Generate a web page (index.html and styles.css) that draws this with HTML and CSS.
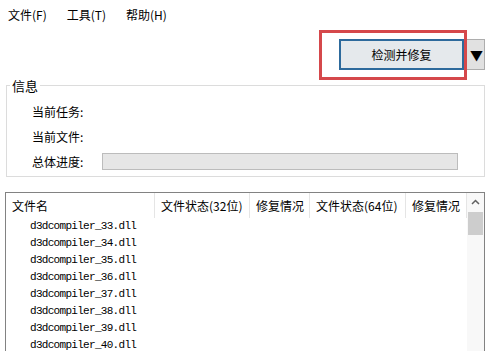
FILE: index.html
```html
<!DOCTYPE html>
<html lang="zh-CN">
	<head>
		<title>DLL修复</title>
		<meta charset="utf-8">
		<link rel="stylesheet" href="styles.css">
	</head>
	<body>
		<div id="window">
			<div class="menubar">
				<span class="menu">文件(F)</span>
				<span class="menu">工具(T)</span>
				<span class="menu">帮助(H)</span>
			</div>
			<div class="toolbar">
				<button type="button" class="btn primary">检测并修复</button>
				<button type="button" class="btn drop">▼</button>
				<div class="highlight"></div>
			</div>
			<fieldset class="group">
				<legend>信息</legend>
				<div class="field"><label>当前任务:</label></div>
				<div class="field"><label>当前文件:</label></div>
				<div class="field"><label>总体进度:</label><div class="progress"></div></div>
			</fieldset>
			<div class="listview">
				<div class="list-main">
					<div class="list-head">
						<div class="col c1">文件名</div>
						<div class="col c2">文件状态(32位)</div>
						<div class="col c3">修复情况</div>
						<div class="col c4">文件状态(64位)</div>
						<div class="col c5">修复情况</div>
					</div>
					<div class="list-body">
						<div class="row">d3dcompiler_33.dll</div>
						<div class="row">d3dcompiler_34.dll</div>
						<div class="row">d3dcompiler_35.dll</div>
						<div class="row">d3dcompiler_36.dll</div>
						<div class="row">d3dcompiler_37.dll</div>
						<div class="row">d3dcompiler_38.dll</div>
						<div class="row">d3dcompiler_39.dll</div>
						<div class="row">d3dcompiler_40.dll</div>
					</div>
				</div>
				<div class="scrollbar">
					<div class="arrow">
						<svg width="9" height="6" viewBox="0 0 9 6"><path d="M1 5 L4.5 1.5 L8 5" fill="none" stroke="#606060" stroke-width="1.5"/></svg>
					</div>
					<div class="thumb"></div>
				</div>
			</div>
		</div>
	</body>
</html>
```

FILE: styles.css
```css
html, body {
	margin: 0;
	background-color: #FFFFFF;
	height: 100%;
	overflow: hidden;
}
body {
	color: #000000;
	font-family: 'Noto Sans CJK SC', 'Noto Sans', sans-serif;
	font-size: 12px;
	cursor: default;
}

.menubar {
	display: flex;
	gap: 20px;
	padding: 6px 0 0 8px;
	line-height: 18px;
}

.toolbar {
	position: relative;
	display: flex;
	justify-content: flex-end;
	gap: 2px;
	margin-top: 15px;
	padding-right: 4px;
}
.btn {
	appearance: none;
	margin: 0;
	padding: 0;
	height: 31px;
	font-family: inherit;
	font-size: 12px;
	color: #000000;
	background-color: #E1E1E1;
	border: 1px solid #ADADAD;
	outline: none;
}
.btn.primary {
	width: 125px;
	background-color: #E5E9EC;
	border: 2px solid #2D6A9C;
}
.btn.drop {
	width: 19px;
	font-size: 13px;
	padding-left: 2px;
}
.highlight {
	position: absolute;
	left: 319px;
	top: -9px;
	width: 142px;
	height: 44px;
	border: 3px solid #D5484B;
}

.group {
	margin: 7px 4px 0 6px;
	padding: 5px 0 8px 0;
	border: 1px solid #DCDCDC;
	height: 85px;
}
.group legend {
	margin-left: 3px;
	padding: 0 2px;
	line-height: 17px;
	font-size: 13px;
}
.field {
	display: flex;
	align-items: center;
	height: 25px;
	padding-left: 25px;
}
.field label {
	width: 70px;
}
.progress {
	width: 354px;
	height: 15px;
	background-color: #E6E6E6;
	border: 1px solid #BCBCBC;
}

.listview {
	display: flex;
	margin: 15px 4px 0 5px;
	height: 200px;
	border: 1px solid #828282;
}
.list-main {
	flex: 1 1 auto;
}
.list-head {
	display: flex;
	height: 25px;
}
.col {
	box-sizing: border-box;
	height: 25px;
	line-height: 26px;
	padding-left: 6px;
	border-right: 1px solid #E5E5E5;
	white-space: nowrap;
	overflow: hidden;
}
.c1 { width: 149px; }
.c2 { width: 95px; }
.c3 { width: 60px; }
.c4 { width: 96px; }
.c5 { width: 61px; }
.row {
	height: 17px;
	line-height: 17px;
	padding-left: 24px;
	font-family: 'Liberation Mono', monospace;
	font-size: 11px;
	letter-spacing: -0.7px;
}

.scrollbar {
	flex: 0 0 17px;
	background-color: #F8F8F8;
	display: flex;
	flex-direction: column;
	align-items: center;
}
.arrow {
	height: 18px;
	display: flex;
	align-items: center;
	justify-content: center;
}
.thumb {
	margin-top: 1px;
	width: 15px;
	height: 23px;
	background-color: #CDCDCD;
}
```
